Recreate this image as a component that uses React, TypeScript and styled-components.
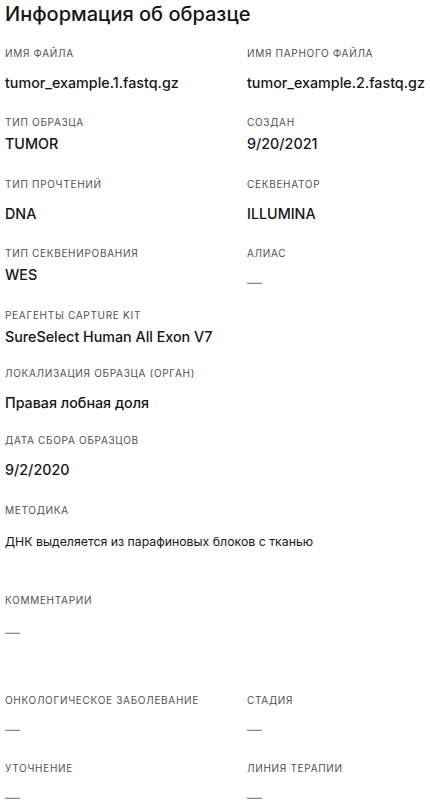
import React from 'react';
import styled, { createGlobalStyle } from 'styled-components';

interface IFieldProps {
  label: string;
  value?: string;
  tight?: boolean;
  small?: boolean;
  wide?: boolean;
}

const GlobalStyle = createGlobalStyle`
  body {
    margin: 0;
    background: #ffffff;
    font-family: Inter, "Noto Sans", sans-serif;
    color: #1b1b1f;
  }
`;

const Page = styled.div`
  padding: 0 5px;
  width: 430px;
  box-sizing: border-box;
`;

const Title = styled.h2`
  margin: 0 0 18px;
  font-size: 20px;
  line-height: 28px;
  font-weight: 500;
  color: #16161a;
`;

const Row = styled.div<{ $space?: number }>`
  display: grid;
  grid-template-columns: 242px 1fr;
  margin-bottom: ${(p) => (p.$space !== undefined ? p.$space : 22)}px;
`;

const FieldBox = styled.div<{ $wide?: boolean }>`
  display: flex;
  flex-direction: column;
  grid-column: ${(p) => (p.$wide ? '1 / -1' : 'auto')};
`;

const Label = styled.div`
  font-size: 10px;
  line-height: 14px;
  letter-spacing: 0.7px;
  text-transform: uppercase;
  color: #505058;
`;

const Value = styled.div<{ $tight?: boolean; $small?: boolean }>`
  margin-top: ${(p) => (p.$tight ? 5 : p.$small ? 15 : 13)}px;
  font-size: ${(p) => (p.$small ? 12.3 : 14.3)}px;
  line-height: 20px;
  font-weight: ${(p) => (p.$small ? 400 : 500)};
  color: #16161a;
`;

const Empty = styled.div<{ $small?: boolean }>`
  margin-top: ${(p) => (p.$small ? 16 : 13)}px;
  font-size: 15px;
  line-height: 20px;
  color: #8a8a90;
`;

const Field: React.FC<IFieldProps> = ({ label, value, tight, small, wide }) => (
  <FieldBox $wide={wide}>
    <Label>{label}</Label>
    {value ? (
      <Value $tight={tight} $small={small}>
        {value}
      </Value>
    ) : (
      <Empty $small={small}>—</Empty>
    )}
  </FieldBox>
);

const App: React.FC = () => {
  return (
    <Page>
      <GlobalStyle />
      <Title>Информация об образце</Title>
      <Row>
        <Field label="Имя файла" value="tumor_example.1.fastq.gz" />
        <Field label="Имя парного файла" value="tumor_example.2.fastq.gz" />
      </Row>
      <Row $space={23}>
        <Field label="Тип образца" value="TUMOR" tight />
        <Field label="Создан" value="9/20/2021" tight />
      </Row>
      <Row>
        <Field label="Тип прочтений" value="DNA" />
        <Field label="Секвенатор" value="ILLUMINA" />
      </Row>
      <Row $space={15}>
        <Field label="Тип секвенирования" value="WES" tight />
        <Field label="Алиас" />
      </Row>
      <Row $space={19}>
        <Field wide label="Реагенты Capture Kit" value="SureSelect Human All Exon V7" tight />
      </Row>
      <Row $space={20}>
        <Field wide label="Локализация образца (орган)" value="Правая лобная доля" />
      </Row>
      <Row $space={23}>
        <Field wide label="Дата сбора образцов" value="9/2/2020" />
      </Row>
      <Row $space={41}>
        <Field
          wide
          small
          label="Методика"
          value="ДНК выделяется из парафиновых блоков с тканью"
        />
      </Row>
      <Row $space={50}>
        <Field wide small label="Комментарии" />
      </Row>
      <Row $space={21}>
        <Field label="Онкологическое заболевание" />
        <Field label="Стадия" />
      </Row>
      <Row $space={0}>
        <Field label="Уточнение" />
        <Field label="Линия терапии" />
      </Row>
    </Page>
  );
};

export default App;
